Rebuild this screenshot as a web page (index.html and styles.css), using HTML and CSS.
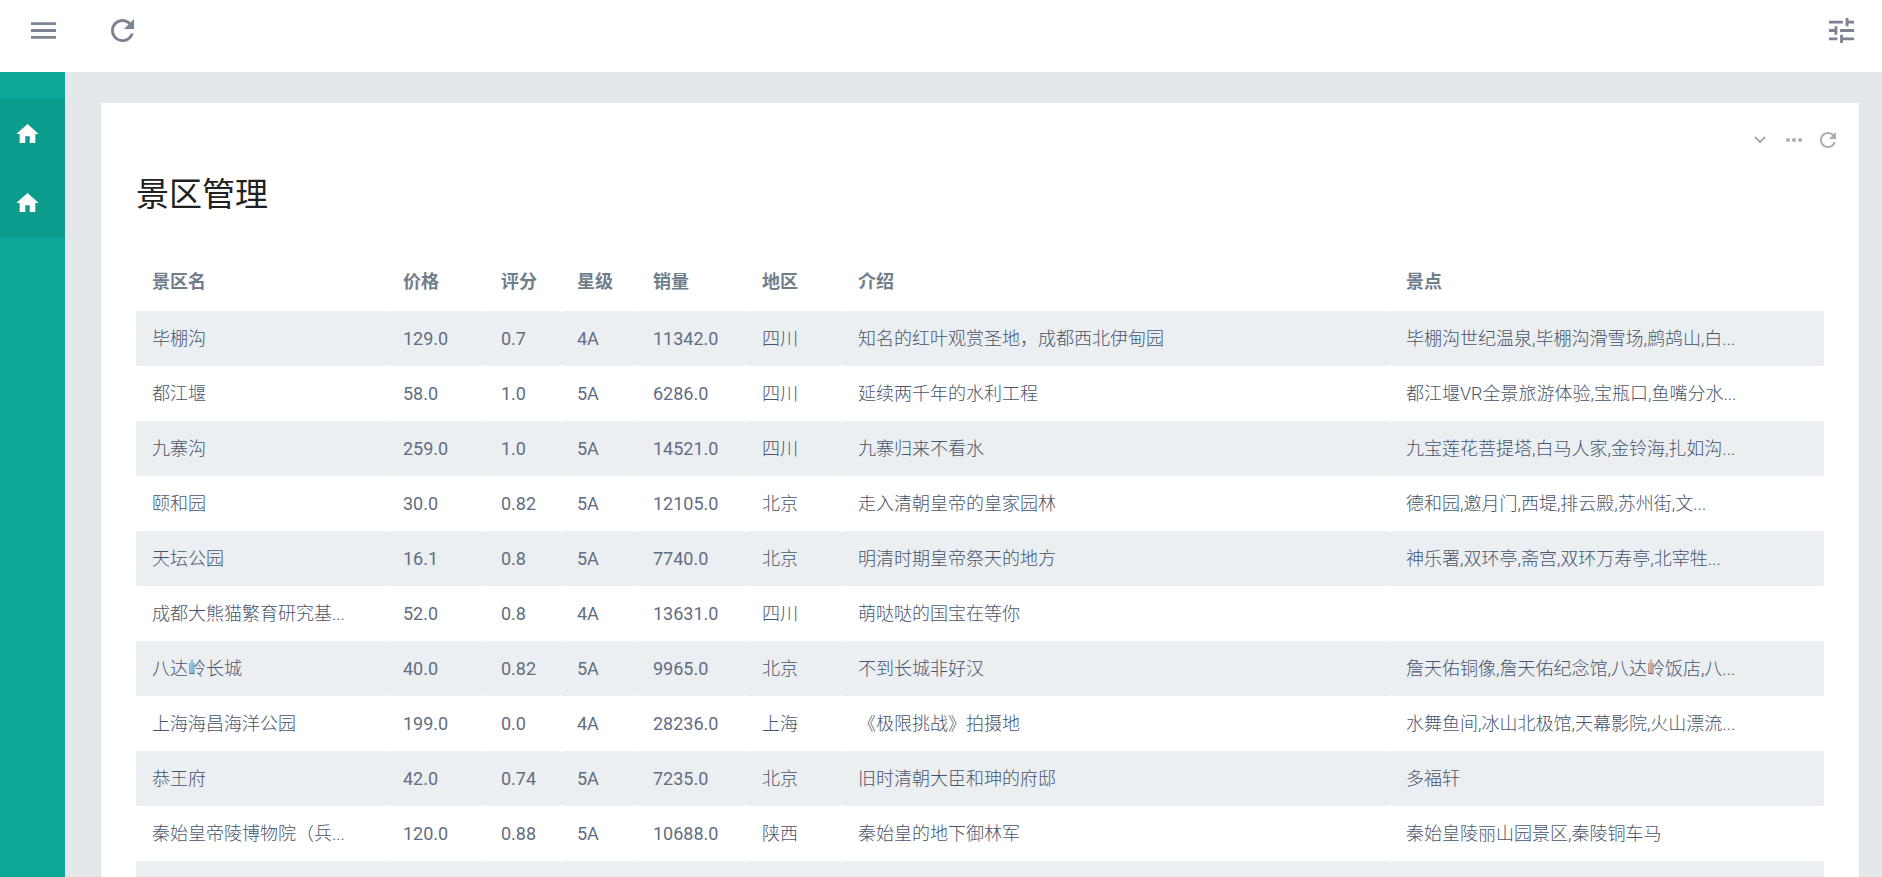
FILE: index.html
```html
<!DOCTYPE html>
<html lang="zh-CN">
<head>
<meta charset="utf-8">
<title>景区管理</title>
<link rel="stylesheet" href="styles.css">
</head>
<body>
<svg class="sprite" aria-hidden="true">
  <symbol id="icon-refresh" viewBox="4 4 16 16"><path d="M17.65 6.35C16.2 4.9 14.21 4 12 4c-4.42 0-7.99 3.58-7.99 8s3.57 8 7.99 8c3.73 0 6.84-2.55 7.73-6h-2.08c-.82 2.33-3.04 4-5.65 4-3.31 0-6-2.69-6-6s2.69-6 6-6c1.66 0 3.14.69 4.22 1.78L13 11h7V4l-2.35 2.35z"/></symbol>
  <symbol id="icon-home" viewBox="2 3 20 17"><path d="M10 20v-6h4v6h5v-8h3L12 3 2 12h3v8z"/></symbol>
</svg>
<header class="topbar">
  <div class="topbar-group">
    <button class="icon-button" type="button" aria-label="菜单"><svg class="icon-menu" viewBox="3 6 18 12"><path d="M3 18h18v-2H3v2zm0-5h18v-2H3v2zm0-7v2h18V6H3z"/></svg></button>
    <button class="icon-button" type="button" aria-label="刷新"><svg class="icon-reload"><use href="#icon-refresh"/></svg></button>
  </div>
  <button class="icon-button" type="button" aria-label="设置"><svg class="icon-tune" viewBox="3 3 18 18"><path d="M3 17v2h6v-2H3zM3 5v2h10V5H3zm10 16v-2h8v-2h-8v-2h-2v6h2zM7 9v2H3v2h4v2h2V9H7zm14 4v-2H11v2h10zm-6-4h2V7h4V5h-4V3h-2v6z"/></svg></button>
</header>
<div class="shell">
  <nav class="sidebar">
    <ul class="nav">
      <li><a class="nav-link" href="#" aria-label="首页"><svg><use href="#icon-home"/></svg></a></li>
      <li><a class="nav-link" href="#" aria-label="主页"><svg><use href="#icon-home"/></svg></a></li>
    </ul>
  </nav>
  <main class="content">
    <section class="card">
      <div class="card-actions">
        <button class="card-button" type="button" aria-label="收起"><svg class="icon-chevron" viewBox="0 0 12 8"><path d="M1 1l5 5 5-5" fill="none" stroke="currentColor" stroke-width="2"/></svg></button>
        <button class="card-button" type="button" aria-label="更多"><svg class="icon-more" viewBox="0 0 16 4"><circle cx="2" cy="2" r="2"/><circle cx="8" cy="2" r="2"/><circle cx="14" cy="2" r="2"/></svg></button>
        <button class="card-button" type="button" aria-label="重新加载"><svg class="icon-small-reload"><use href="#icon-refresh"/></svg></button>
      </div>
      <h1 class="title">景区管理</h1>
      <table class="table">
        <colgroup><col class="col-name"><col class="col-price"><col class="col-short"><col class="col-short"><col class="col-sales"><col class="col-area"><col class="col-intro"><col></colgroup>
        <thead>
          <tr><th>景区名</th><th>价格</th><th>评分</th><th>星级</th><th>销量</th><th>地区</th><th>介绍</th><th>景点</th></tr>
        </thead>
        <tbody>
          <tr><td class="zh">毕棚沟</td><td>129.0</td><td>0.7</td><td>4A</td><td>11342.0</td><td class="zh">四川</td><td class="zh">知名的红叶观赏圣地，成都西北伊甸园</td><td class="zh">毕棚沟世纪温泉,毕棚沟滑雪场,鹧鸪山,白...</td></tr>
          <tr><td class="zh">都江堰</td><td>58.0</td><td>1.0</td><td>5A</td><td>6286.0</td><td class="zh">四川</td><td class="zh">延续两千年的水利工程</td><td class="zh">都江堰VR全景旅游体验,宝瓶口,鱼嘴分水...</td></tr>
          <tr><td class="zh">九寨沟</td><td>259.0</td><td>1.0</td><td>5A</td><td>14521.0</td><td class="zh">四川</td><td class="zh">九寨归来不看水</td><td class="zh">九宝莲花菩提塔,白马人家,金铃海,扎如沟...</td></tr>
          <tr><td class="zh">颐和园</td><td>30.0</td><td>0.82</td><td>5A</td><td>12105.0</td><td class="zh">北京</td><td class="zh">走入清朝皇帝的皇家园林</td><td class="zh">德和园,邀月门,西堤,排云殿,苏州街,文...</td></tr>
          <tr><td class="zh">天坛公园</td><td>16.1</td><td>0.8</td><td>5A</td><td>7740.0</td><td class="zh">北京</td><td class="zh">明清时期皇帝祭天的地方</td><td class="zh">神乐署,双环亭,斋宫,双环万寿亭,北宰牲...</td></tr>
          <tr><td class="zh">成都大熊猫繁育研究基...</td><td>52.0</td><td>0.8</td><td>4A</td><td>13631.0</td><td class="zh">四川</td><td class="zh">萌哒哒的国宝在等你</td><td class="zh"></td></tr>
          <tr><td class="zh">八达岭长城</td><td>40.0</td><td>0.82</td><td>5A</td><td>9965.0</td><td class="zh">北京</td><td class="zh">不到长城非好汉</td><td class="zh">詹天佑铜像,詹天佑纪念馆,八达岭饭店,八...</td></tr>
          <tr><td class="zh">上海海昌海洋公园</td><td>199.0</td><td>0.0</td><td>4A</td><td>28236.0</td><td class="zh">上海</td><td class="zh">《极限挑战》拍摄地</td><td class="zh">水舞鱼间,冰山北极馆,天幕影院,火山漂流...</td></tr>
          <tr><td class="zh">恭王府</td><td>42.0</td><td>0.74</td><td>5A</td><td>7235.0</td><td class="zh">北京</td><td class="zh">旧时清朝大臣和珅的府邸</td><td class="zh">多福轩</td></tr>
          <tr><td class="zh">秦始皇帝陵博物院（兵...</td><td>120.0</td><td>0.88</td><td>5A</td><td>10688.0</td><td class="zh">陕西</td><td class="zh">秦始皇的地下御林军</td><td class="zh">秦始皇陵丽山园景区,秦陵铜车马</td></tr>
          <tr><td></td><td></td><td></td><td></td><td></td><td></td><td></td><td></td></tr>
        </tbody>
      </table>
    </section>
  </main>
</div>
</body>
</html>
```

FILE: styles.css
```css
* { box-sizing: border-box; }

body {
  margin: 0;
  height: 100vh;
  display: flex;
  flex-direction: column;
  overflow: hidden;
  background: #e4e8eb;
  color: #626d82;
  font-family: Roboto, "Noto Sans CJK SC", sans-serif;
  font-size: 18px;
  line-height: 27px;
}

.sprite { display: none; }

svg { display: block; fill: currentColor; }

button {
  padding: 0;
  border: 0;
  background: none;
  color: inherit;
  cursor: pointer;
}

.topbar {
  flex: none;
  display: flex;
  justify-content: space-between;
  align-items: flex-start;
  height: 72px;
  padding: 13px 24px 0 26px;
  background: #fff;
  color: #7c8393;
}

.topbar-group { display: flex; gap: 45px; }

.icon-button {
  display: grid;
  place-items: center;
  width: 34px;
  height: 34px;
}

.icon-menu { width: 25px; height: 17px; }
.icon-reload { width: 23px; height: 23px; }
.icon-tune { width: 25px; height: 25px; }

.shell { flex: 1; min-height: 0; display: flex; }

.sidebar {
  flex: none;
  width: 65px;
  padding-top: 27px;
  background: #0ca89a;
}

.nav {
  margin: 0;
  padding: 0 0 1px;
  list-style: none;
  background: #0c9c8e;
}

.nav-link {
  display: flex;
  align-items: center;
  height: 69px;
  padding-left: 16px;
  color: #fff;
}

.nav-link svg { width: 23px; height: 19px; }

.content {
  flex: 1;
  min-width: 0;
  padding: 31px 23px 0 36px;
  overflow: hidden;
}

.card { padding: 24px 35px; background: #fff; }

.card-actions {
  display: flex;
  justify-content: flex-end;
  gap: 10px;
  margin-right: -16px;
  color: #adadad;
}

.card-button {
  display: grid;
  place-items: center;
  width: 24px;
  height: 26px;
}

.icon-chevron { width: 12px; height: 8px; }
.icon-more { width: 16px; height: 4px; }
.icon-small-reload { width: 16px; height: 16px; }

.title {
  margin: 14px 0 31px;
  color: #212121;
  font-size: 33px;
  font-weight: 400;
  line-height: 56px;
}

.table {
  width: 100%;
  table-layout: fixed;
  border-collapse: separate;
  border-spacing: 0;
}

.col-name { width: 251px; }
.col-price { width: 98px; }
.col-short { width: 76px; }
.col-sales { width: 109px; }
.col-area { width: 96px; }
.col-intro { width: 548px; }

.table th,
.table td {
  padding: 14px 16px;
  text-align: left;
  white-space: nowrap;
}

.table th {
  padding-bottom: 16px;
  color: #707e8b;
  font-weight: 700;
}

.table td { height: 55px; border-radius: 2px; }

.table .zh { color: #48546c; font-weight: 300; }

.table tbody tr:nth-child(odd) td { background: #ebeff2; }
```
